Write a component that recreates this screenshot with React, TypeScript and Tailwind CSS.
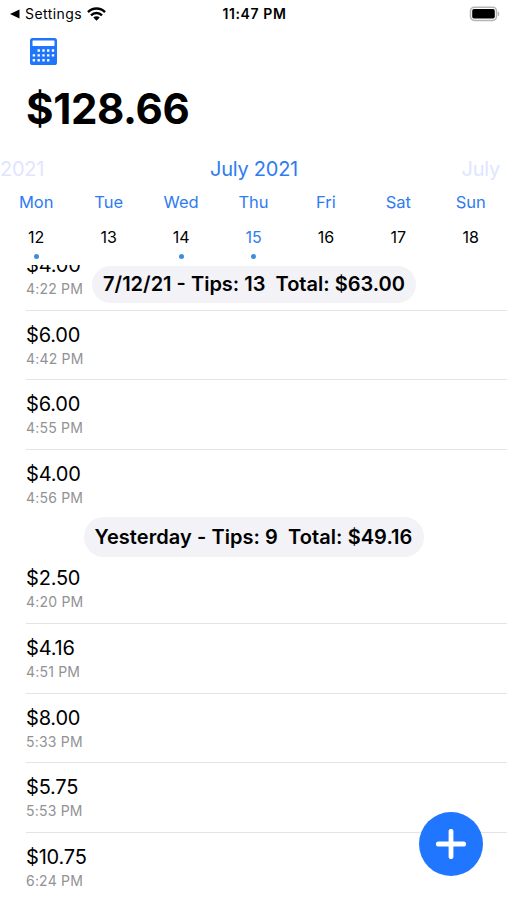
type Tip = { amount: string; time: string };

const days = [
  { name: "Mon", date: "12", dot: true },
  { name: "Tue", date: "13" },
  { name: "Wed", date: "14", dot: true },
  { name: "Thu", date: "15", dot: true, today: true },
  { name: "Fri", date: "16" },
  { name: "Sat", date: "17" },
  { name: "Sun", date: "18" },
];

const monday: Tip[] = [
  { amount: "$4.00", time: "4:22 PM" },
  { amount: "$6.00", time: "4:42 PM" },
  { amount: "$6.00", time: "4:55 PM" },
  { amount: "$4.00", time: "4:56 PM" },
];

const yesterday: Tip[] = [
  { amount: "$2.50", time: "4:20 PM" },
  { amount: "$4.16", time: "4:51 PM" },
  { amount: "$8.00", time: "5:33 PM" },
  { amount: "$5.75", time: "5:53 PM" },
  { amount: "$10.75", time: "6:24 PM" },
];

function StatusBar() {
  return (
    <div className="grid h-7 grid-cols-3 items-center pr-[7px] pl-[10px] text-[14px]">
      <div className="-mt-px flex items-center">
        <svg width="10" height="10" viewBox="0 0 10 10">
          <path d="M0 5 9.5 .5v9z" fill="#000" />
        </svg>
        <span className="ml-[5px] tracking-[0.45px]">Settings</span>
        <svg className="ml-[5px]" width="19" height="14" viewBox="0 0 19 14">
          <g fill="none" stroke="#000" strokeWidth="2.4">
            <path d="M1 5.1a12 12 0 0 1 17 0" />
            <path d="M4 8.3a7.8 7.8 0 0 1 11 0" />
          </g>
          <path d="M6.3 10.5a4.6 4.6 0 0 1 6.4 0L9.5 13.8z" fill="#000" />
        </svg>
      </div>
      <div className="-mt-px -mr-px -ml-[2px] text-center font-semibold tracking-[0.6px]">11:47 PM</div>
      <svg className="-mt-px justify-self-end" width="31" height="16" viewBox="0 0 31 16">
        <rect x="1.5" y="1.2" width="26" height="13.2" rx="3.8" fill="#fff" stroke="#b5b5b5" strokeWidth="1.5" />
        <rect x="3.2" y="3.1" width="22.6" height="9.4" rx="1.8" fill="#000" />
        <path d="M28.8 5.2c2 .8 2 4.4 0 5.2z" fill="#b5b5b5" />
      </svg>
    </div>
  );
}

function CalculatorIcon() {
  const keys = [
    [8.7, 13.5, 18.2, 23],
    [3.9, 8.7, 13.5, 18.2, 23],
    [3.9, 8.7, 13.5, 18.2],
  ];
  return (
    <svg width="27" height="27" viewBox="0 0 27 27">
      <rect width="27" height="27" rx="2.6" fill="#1f75fb" />
      <rect x="2.5" y="2.4" width="22" height="5.5" rx=".6" fill="#fff" />
      {keys.map((row, r) =>
        row.map((x) => (
          <rect key={`${r}-${x}`} x={x - 1.2} y={11.3 + r * 4.9} width="2.4" height="2.4" rx=".3" fill="#fff" />
        )),
      )}
    </svg>
  );
}

function Pill({ children, className }: { children: string; className: string }) {
  return (
    <div className={`flex shrink-0 items-center justify-center rounded-full bg-[#f2f2f7] font-semibold whitespace-pre ${className}`}>
      {children}
    </div>
  );
}

function Rows({ tips }: { tips: Tip[] }) {
  return (
    <ul className="pl-[26px]">
      {tips.map((tip, i) => (
        <li
          key={tip.time}
          className={`h-[69.7px] border-b pt-[11px] ${i === tips.length - 1 ? "border-transparent" : "border-[#e4e4e6]"}`}
        >
          <div className="text-[20px] leading-[26px] tracking-[-0.2px]">{tip.amount}</div>
          <div className="mt-[1px] text-[14px] leading-[20px] tracking-[0.2px] text-[#929295]">{tip.time}</div>
        </li>
      ))}
    </ul>
  );
}

export default function App() {
  return (
    <div className="relative flex h-[900px] w-[507px] flex-col overflow-hidden bg-white font-[Inter,sans-serif] text-black">
      <StatusBar />
      <header className="h-[124px] shrink-0 pt-[10px] pl-[30px]">
        <CalculatorIcon />
        <h1 className="mt-[19px] -ml-[4px] text-[42px] leading-[50px] font-bold tracking-[-0.35px]">$128.66</h1>
      </header>

      <section className="h-[113px] shrink-0 text-[#2f7cf0]">
        <div className="flex h-[33px] items-center justify-between overflow-hidden pr-[7px] text-[20px] tracking-[-0.25px]">
          <span className="w-[52px] text-[#dfe5ff]">2021</span>
          <span>July 2021</span>
          <span className="w-[44px] text-right text-[#dfe5ff]">July</span>
        </div>
        <div className="grid grid-cols-7">
          {days.map((d) => (
            <div key={d.name} className="flex flex-col items-center">
              <span className="mt-[5px] text-[16.5px] leading-[24px]">{d.name}</span>
              <span className={`mt-[11px] text-[16px] leading-[24px] ${d.today ? "" : "text-black"}`}>{d.date}</span>
              {d.dot && <span className="mt-[5px] size-[5px] rounded-full bg-[#3d8ddd]" />}
            </div>
          ))}
        </div>
      </section>

      <main className="relative min-h-0 flex-1 overflow-hidden">
        <div className="-mt-[24px]">
          <Rows tips={monday} />
          <div className="flex h-[34.4px] items-center justify-center">
            <Pill className="h-[40px] w-[340px] text-[20px] tracking-[0.06px]">{"Yesterday - Tips: 9  Total: $49.16"}</Pill>
          </div>
          <Rows tips={yesterday} />
        </div>
        <Pill className="absolute top-px left-[92px] h-[37px] w-[324px] pb-px text-[20px]">{"7/12/21 - Tips: 13  Total: $63.00"}</Pill>
      </main>

      <button className="absolute top-[812px] left-[419px] flex size-[64px] items-center justify-center rounded-full bg-[#2176ff]" aria-label="Add tip">
        <svg width="30" height="30" viewBox="0 0 30 30">
          <path d="M15 2.3v25.4M2.3 15h25.4" stroke="#fff" strokeWidth="4.8" strokeLinecap="round" />
        </svg>
      </button>
    </div>
  );
}
